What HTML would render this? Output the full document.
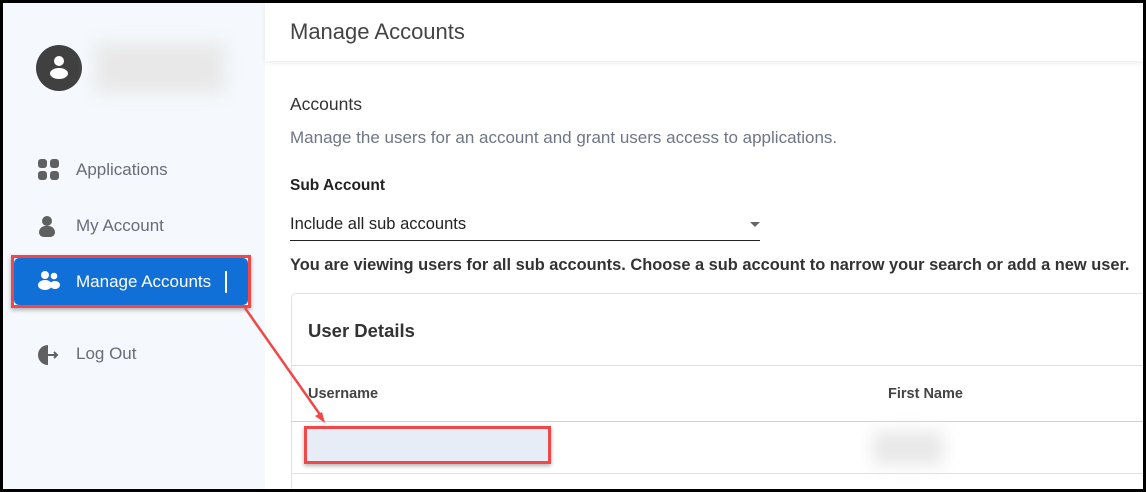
<!DOCTYPE html>
<html><head><style>
*{margin:0;padding:0;box-sizing:border-box}
body{width:1146px;height:492px;overflow:hidden;background:#000;font-family:"Liberation Sans",sans-serif;position:relative}
.frame{position:absolute;left:3px;top:3px;width:1140px;height:486px;background:#fff;overflow:hidden}
.side{position:absolute;left:0;top:0;width:262px;height:486px;background:#f5f9fd}
.t{position:absolute;white-space:nowrap}
.nav{font-size:17px;color:#6b6b78}
.blur{position:absolute;filter:blur(8px)}
</style></head><body>
<div class="frame">
<div class="side">
 <div style="position:absolute;left:33px;top:42px;width:46px;height:46px;border-radius:50%;background:#404040"></div>
 <div style="position:absolute;left:51px;top:53px;width:10px;height:10px;border-radius:50%;background:#fff"></div>
 <div style="position:absolute;left:47px;top:65px;width:18px;height:11px;border-radius:50%;background:#fff"></div>
 <div class="blur" style="left:92px;top:40px;width:130px;height:50px;background:#e8e8e8"></div>
 <div style="position:absolute;left:35px;top:156px;width:9px;height:9px;border-radius:3px;background:#606060"></div>
 <div style="position:absolute;left:47px;top:156px;width:9px;height:9px;border-radius:3px;background:#606060"></div>
 <div style="position:absolute;left:35px;top:168px;width:9px;height:9px;border-radius:3px;background:#606060"></div>
 <div style="position:absolute;left:47px;top:168px;width:9px;height:9px;border-radius:3px;background:#606060"></div>
 <div class="t nav" style="left:73px;top:157px">Applications</div>
 <div style="position:absolute;left:39px;top:213px;width:10px;height:10px;border-radius:50%;background:#606060"></div>
 <div style="position:absolute;left:36px;top:223px;width:16px;height:11px;border-radius:7px 7px 5px 5px;background:#606060"></div>
 <div class="t nav" style="left:73px;top:213px">My Account</div>
 <div style="position:absolute;left:8px;top:252px;width:240px;height:53px;border:3px solid #f04848;box-shadow:0 2px 4px rgba(0,0,0,.3)"></div>
 <div style="position:absolute;left:11px;top:255px;width:234px;height:47px;background:#1070d8;border-radius:5px"></div>
 <svg style="position:absolute;left:35px;top:267px" width="24" height="22" viewBox="0 0 24 22"><circle cx="7" cy="5" r="4" fill="#fff"/><ellipse cx="7" cy="15" rx="7" ry="5" fill="#fff"/><circle cx="16" cy="6" r="3.3" fill="#fff"/><ellipse cx="17" cy="15" rx="5" ry="4" fill="#fff"/></svg>
 <div class="t nav" style="left:73px;top:269px;color:#fff">Manage Accounts</div>
 <div style="position:absolute;left:222px;top:268px;width:2px;height:22px;background:#fff"></div>
 <svg style="position:absolute;left:35px;top:342px" width="22" height="20" viewBox="0 0 22 20"><path d="M10 0A10 10 0 0 0 10 20Z" fill="#606060"/><path d="M10 10H19M16 7l3 3-3 3" stroke="#606060" stroke-width="2" fill="none"/></svg>
 <div class="t nav" style="left:73px;top:341px">Log Out</div>
</div>
<div style="position:absolute;left:262px;top:0;width:878px;height:58px;background:#fff;box-shadow:0 2px 5px rgba(0,0,0,.08)"></div>
<div class="t" style="left:287px;top:16px;font-size:22px;color:#444">Manage Accounts</div>
<div class="t" style="left:287px;top:91px;font-size:17.5px;color:#333">Accounts</div>
<div class="t" style="left:287px;top:125px;font-size:17px;color:#707585">Manage the users for an account and grant users access to applications.</div>
<div class="t" style="left:287px;top:174px;font-size:15.5px;font-weight:bold;color:#222">Sub Account</div>
<div class="t" style="left:287px;top:212px;font-size:16.5px;color:#222">Include all sub accounts</div>
<div style="position:absolute;left:747px;top:219px;border-left:5px solid transparent;border-right:5px solid transparent;border-top:5px solid #666"></div>
<div style="position:absolute;left:287px;top:237px;width:470px;height:1px;background:#222"></div>
<div class="t" style="left:287px;top:253px;font-size:16.4px;font-weight:bold;color:#333">You are viewing users for all sub accounts. Choose a sub account to narrow your search or add a new user.</div>
<div style="position:absolute;left:288px;top:290px;width:880px;height:220px;border:1px solid #e2e2e2;border-radius:5px"></div>
<div class="t" style="left:305px;top:317px;font-size:18.5px;font-weight:bold;color:#333">User Details</div>
<div style="position:absolute;left:288px;top:362px;width:860px;height:1px;background:#e0e0e0"></div>
<div class="t" style="left:305px;top:383px;font-size:14.5px;font-weight:bold;color:#444">Username</div>
<div class="t" style="left:885px;top:383px;font-size:14.5px;font-weight:bold;color:#444">First Name</div>
<div style="position:absolute;left:288px;top:418px;width:860px;height:1px;background:#d0d0d0"></div>
<div style="position:absolute;left:288px;top:470px;width:860px;height:1px;background:#e0e0e0"></div>
<div style="position:absolute;left:301px;top:423px;width:247px;height:38px;border:3px solid #f04848;background:#e6edf7;box-shadow:0 2px 4px rgba(0,0,0,.3)"></div>
<div class="blur" style="left:870px;top:428px;width:70px;height:34px;background:#e8e8e8"></div>
<svg style="position:absolute;left:0;top:0" width="1140" height="486"><line x1="242" y1="305" x2="318" y2="413" stroke="#f04848" stroke-width="2.5"/><path d="M322 420l-10-7 7-4z" fill="#f04848"/></svg>
</div>
</body></html>
